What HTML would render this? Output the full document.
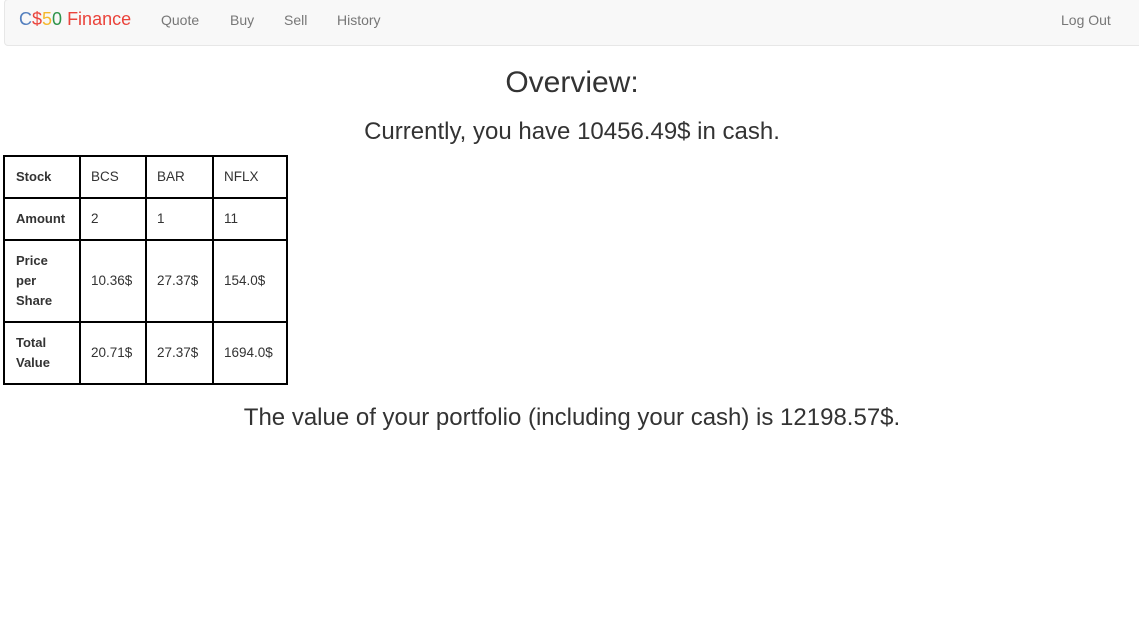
<!DOCTYPE html>
<html><head><meta charset="utf-8"><style>
body{margin:0;width:1139px;height:618px;background:#fff;font-family:"Liberation Sans",Arial,sans-serif;color:#333;position:relative;overflow:hidden}
.nav{position:absolute;left:4px;top:-1px;width:1140px;height:47px;background:#f8f8f8;border:1px solid #e7e7e7;border-radius:4px;box-sizing:border-box}
.a{position:absolute;top:12px;font-size:14px;color:#777}
.brand{position:absolute;left:19px;top:9px;font-size:18px}
.t{position:absolute;left:0;width:1144px;text-align:center}
table{position:absolute;left:3px;top:155px;border-collapse:collapse;font-size:13.5px}
td{border:2px solid #000;padding:0 0 0 10px;vertical-align:middle;line-height:20px}
td.h{font-weight:bold;padding-left:11px;font-size:13px}
</style></head><body>
<div class="nav"></div>
<div class="brand"><span style="color:#537fbe">C</span><span style="color:#ea433b">$</span><span style="color:#f5b82e">5</span><span style="color:#2e944b">0</span> <span style="color:#ea433b">Finance</span></div>
<div class="a" style="left:161px">Quote</div>
<div class="a" style="left:230px">Buy</div>
<div class="a" style="left:284px">Sell</div>
<div class="a" style="left:337px">History</div>
<div class="a" style="left:1061px">Log Out</div>
<div class="t" style="top:66px;font-size:30px">Overview:</div>
<div class="t" style="top:118px;font-size:24px">Currently, you have 10456.49$ in cash.</div>
<table>
<tr style="height:42px"><td class="h" style="width:63px">Stock</td><td style="width:54px">BCS</td><td style="width:55px">BAR</td><td style="width:62px">NFLX</td></tr>
<tr style="height:42px"><td class="h">Amount</td><td>2</td><td>1</td><td>11</td></tr>
<tr style="height:82px"><td class="h">Price<br>per<br>Share</td><td>10.36$</td><td>27.37$</td><td>154.0$</td></tr>
<tr style="height:62px"><td class="h">Total<br>Value</td><td>20.71$</td><td>27.37$</td><td>1694.0$</td></tr>
</table>
<div class="t" style="top:404px;font-size:24px">The value of your portfolio (including your cash) is 12198.57$.</div>
</body></html>
